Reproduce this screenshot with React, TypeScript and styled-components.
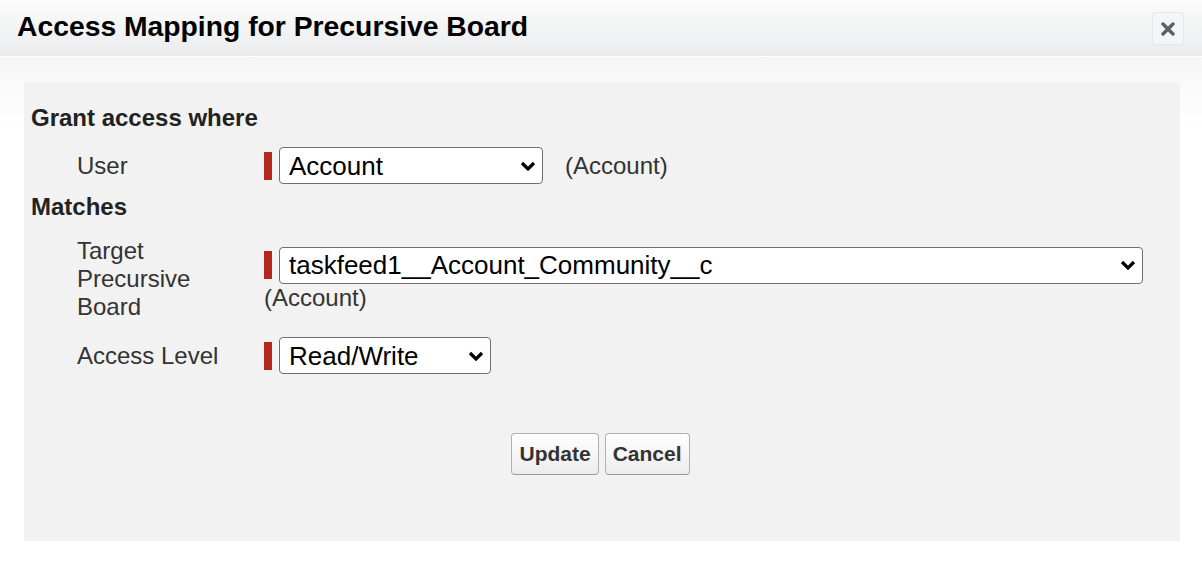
import React from "react";
import styled, { createGlobalStyle } from "styled-components";

const GlobalStyle = createGlobalStyle`
  html, body {
    margin: 0;
    padding: 0;
    background: #ffffff;
  }
  body {
    font-family: "Liberation Sans", Arial, Helvetica, sans-serif;
    color: #333;
  }
`;

const Dialog = styled.div`
  width: 1202px;
  height: 572px;
  display: flex;
  flex-direction: column;
  overflow: hidden;
`;

const Header = styled.div`
  height: 57px;
  box-sizing: border-box;
  display: flex;
  justify-content: space-between;
  align-items: flex-start;
  padding: 12px 18px 0 17px;
  background: linear-gradient(#fcfcfc, #eaebed);
  border-bottom: 1px solid #ffffff;
`;

const Title = styled.h2`
  margin: 0;
  font-size: 28.3px;
  line-height: 28px;
  font-weight: 700;
  color: #000;
`;

const CloseButton = styled.button`
  width: 32px;
  height: 33px;
  margin-top: 0;
  padding: 0;
  display: flex;
  align-items: center;
  justify-content: center;
  background: #f4f5f6;
  border: 1px solid #e6e7e9;
  border-radius: 3px;
  cursor: pointer;
`;

const Body = styled.div`
  flex: 1;
  padding: 25px 22px 0 24px;
  background: linear-gradient(#f6f6f6, #ffffff 70px);
`;

const Panel = styled.div`
  background: #f2f2f2;
  padding: 22px 10px 66px 7px;
`;

const SectionTitle = styled.h3<{ $gap?: number }>`
  margin: ${(p) => p.$gap || 0}px 0 0;
  font-size: 24px;
  line-height: 28px;
  font-weight: 700;
  color: #222;
`;

const Row = styled.div<{ $gap?: number }>`
  display: grid;
  grid-template-columns: 187px 1fr;
  align-items: center;
  margin-top: ${(p) => p.$gap ?? 16}px;
  padding-left: 46px;
`;

const Label = styled.label`
  padding-right: 10px;
  font-size: 24px;
  line-height: 28px;
  color: #333;
`;

const Data = styled.div`
  display: flex;
  flex-wrap: wrap;
  align-items: center;
  column-gap: 22px;
`;

const RequiredField = styled.span`
  display: inline-flex;
  align-items: center;
  gap: 7px;
`;

const RequiredBar = styled.span`
  width: 8px;
  height: 28px;
  background: #b5261d;
`;

const SelectWrap = styled.span`
  position: relative;
  display: inline-flex;
`;

const Select = styled.select<{ $width: number }>`
  appearance: none;
  width: ${(p) => p.$width}px;
  height: 37px;
  box-sizing: border-box;
  padding: 0 36px 0 9px;
  font-family: "Liberation Sans", Arial, Helvetica, sans-serif;
  font-size: 26px;
  color: #000;
  background: #ffffff;
  border: 1px solid #6f6f6f;
  border-radius: 4px;
  outline: none;
`;

const Chevron = styled.svg`
  position: absolute;
  right: 7px;
  top: 50%;
  margin-top: -5px;
  pointer-events: none;
`;

const Hint = styled.span`
  font-size: 24px;
  line-height: 28px;
  color: #333;
`;

const ButtonBar = styled.div`
  display: flex;
  justify-content: center;
  gap: 6px;
  margin-top: 59px;
`;

const Button = styled.button`
  height: 42px;
  padding: 0 7px;
  font-family: "Liberation Sans", Arial, Helvetica, sans-serif;
  font-size: 21px;
  font-weight: 700;
  color: #333;
  background: linear-gradient(#ffffff, #ececec);
  border: 1px solid #b0b0b0;
  border-bottom-color: #9a9a9a;
  border-radius: 4px;
  cursor: pointer;
`;

const Dropdown = ({ value, width }: { value: string; width: number }) => (
  <RequiredField>
    <RequiredBar />
    <SelectWrap>
      <Select $width={width} defaultValue={value}>
        <option>{value}</option>
      </Select>
      <Chevron width="16" height="10" viewBox="0 0 16 10">
        <path d="M2 2 L8 8 L14 2" fill="none" stroke="#000" strokeWidth="3.2" />
      </Chevron>
    </SelectWrap>
  </RequiredField>
);

const App = () => {
  return (
    <>
      <GlobalStyle />
      <Dialog>
        <Header>
          <Title>Access Mapping for Precursive Board</Title>
          <CloseButton aria-label="Close">
            <svg width="14" height="14" viewBox="0 0 14 14">
              <path
                d="M2 2 L12 12 M12 2 L2 12"
                stroke="#5e5e5e"
                strokeWidth="3.4"
                strokeLinecap="round"
              />
            </svg>
          </CloseButton>
        </Header>
        <Body>
          <Panel>
            <SectionTitle>Grant access where</SectionTitle>
            <Row $gap={15}>
              <Label>User</Label>
              <Data>
                <Dropdown value="Account" width={264} />
                <Hint>(Account)</Hint>
              </Data>
            </Row>
            <SectionTitle $gap={9}>Matches</SectionTitle>
            <Row>
              <Label>Target Precursive Board</Label>
              <Data>
                <Dropdown value="taskfeed1__Account_Community__c" width={864} />
                <Hint>(Account)</Hint>
              </Data>
            </Row>
            <Row>
              <Label>Access Level</Label>
              <Data>
                <Dropdown value="Read/Write" width={212} />
              </Data>
            </Row>
            <ButtonBar>
              <Button>Update</Button>
              <Button>Cancel</Button>
            </ButtonBar>
          </Panel>
        </Body>
      </Dialog>
    </>
  );
};

export default App;
